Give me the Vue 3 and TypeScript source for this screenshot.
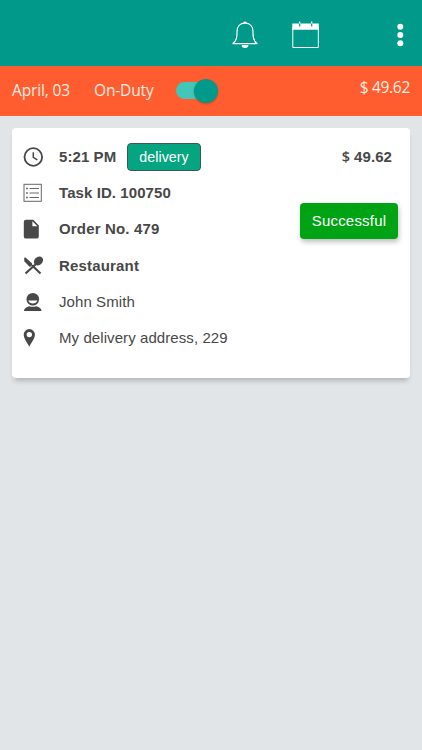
<script setup lang="ts">
type IconName = 'clock' | 'list' | 'file' | 'cutlery' | 'person' | 'pin'

interface DetailRow {
  icon: IconName
  text: string
  strong: boolean
}

const amount = '49.62'

const rows: DetailRow[] = [
  { icon: 'clock', text: '5:21 PM', strong: true },
  { icon: 'list', text: 'Task ID. 100750', strong: true },
  { icon: 'file', text: 'Order No. 479', strong: true },
  { icon: 'cutlery', text: 'Restaurant', strong: true },
  { icon: 'person', text: 'John Smith', strong: false },
  { icon: 'pin', text: 'My delivery address, 229', strong: false },
]
</script>

<template>
  <div class="screen">
    <header class="topbar">
      <svg class="bell" viewBox="0 0 26 28" width="26" height="28">
        <path d="M.9 22.600C4 20.300 5 18 5 13V10.500C5 5.500 8.200 2.200 13 2.200S21 5.500 21 10.500V13C21 18 22 20.300 25.100 22.600Z" fill="none" stroke="#fff" stroke-width="1.200" stroke-linejoin="round" />
        <path d="M11.200 2.100a1.800 1.700 0 0 1 3.600 0Z M9.600 24h6.800a3.400 3 0 0 1-6.800 0Z" fill="#fff" />
      </svg>
      <svg class="calendar" viewBox="0 0 28 28" width="28" height="28">
        <path d="M.8 6V26.500H26.300V6" fill="none" stroke="#fff" stroke-width="1" />
        <path d="M.3 2.500h26.500v6.300H.3Z M7.100.4h1.200v3H7.100Z M19.100.4h1.200v3h-1.200Z" fill="#fff" />
        <path d="M7.700 2.500v3M19.700 2.500v3" stroke="#00998a" stroke-width="1.200" />
      </svg>
      <svg class="more" viewBox="0 0 8 24" width="8" height="24">
        <circle cx="4.300" cy="3.700" r="3" fill="#fff" />
        <circle cx="4.300" cy="12" r="3" fill="#fff" />
        <circle cx="4.300" cy="20.300" r="3" fill="#fff" />
      </svg>
    </header>

    <section class="status">
      <span class="date">April, 03</span>
      <span class="duty">On-Duty</span>
      <span class="switch"><span class="knob"></span></span>
      <span class="total">$ {{ amount }}</span>
    </section>

    <main class="card">
      <ul class="details">
        <li v-for="row in rows" :key="row.icon" class="row">
          <span class="icon">
            <svg viewBox="0 0 20 20" width="20" height="20">
              <template v-if="row.icon === 'clock'">
                <circle cx="10.300" cy="10" r="8.800" fill="none" stroke="#484848" stroke-width="1.800" />
                <path d="M10.300 5.300V10.300L14.300 12.800" fill="none" stroke="#484848" stroke-width="1.500" />
              </template>
              <template v-else-if="row.icon === 'list'">
                <rect x="1" y="1.300" width="17.300" height="17" fill="none" stroke="#666" stroke-width="1" />
                <path d="M6.500 5.500h9.500M6.500 10h9.500M6.500 14.500h9.500" stroke="#666" stroke-width="1" />
                <path d="M3.200 4.800h1.500v1.500H3.200ZM3.200 9.300h1.500v1.500H3.200ZM3.200 13.800h1.500v1.500H3.200Z" fill="#484848" />
              </template>
              <path v-else-if="row.icon === 'file'" fill-rule="evenodd" fill="#484848" d="M3 .8h7.300L15.800 6.400V17.400a2.200 2.200 0 0 1-2.200 2.200H3A2.200 2.200 0 0 1 .8 17.400V3A2.200 2.200 0 0 1 3 .8ZM9.400 2.200v5h5Z" />
              <template v-else-if="row.icon === 'cutlery'">
                <path d="M1.900 .9L8.900 7.200 9.100 9.200 6.800 11 1.500 5.600Q.2 3.300 1.900 .9Z" fill="#484848" />
                <path d="M2.500 17.600L13 8M9 9.300L17.500 17.600" stroke="#484848" stroke-width="2.100" />
                <ellipse cx="15.500" cy="5" rx="5" ry="4" transform="rotate(-42 15.500 5)" fill="#484848" />
              </template>
              <template v-else-if="row.icon === 'person'">
                <circle cx="9.800" cy="7.300" r="6.300" fill="#484848" />
                <path d="M5.300 8.600H14.300C13.500 12.600 6.100 12.600 5.300 8.600Z" fill="#fff" />
                <path d="M.9 18.900C1.200 16.400 3.200 14.900 6.200 14.200Q9.800 15.400 13.400 14.200C16.400 14.900 18.300 16.400 18.600 18.900Z" fill="#484848" />
              </template>
              <path v-else fill-rule="evenodd" fill="#484848" d="M6.300 1a5.600 5.600 0 0 1 5.600 5.600C11.900 10.500 8.500 14.500 6.300 18.700 4.100 14.500.7 10.500.7 6.600A5.600 5.600 0 0 1 6.300 1ZM6.300 3.900a2.700 2.700 0 1 0 0 5.400 2.700 2.700 0 0 0 0-5.400Z" />
            </svg>
          </span>
          <span class="text" :class="[row.icon, { strong: row.strong }]">{{ row.text }}</span>
          <template v-if="row.icon === 'clock'">
            <span class="tag">delivery</span>
            <span class="price"><span class="currency">$</span>{{ amount }}</span>
          </template>
        </li>
      </ul>
      <div class="result">Successful</div>
    </main>
  </div>
</template>

<style>
body {
  margin: 0;
  background: #e1e5e8;
}
</style>

<style scoped>
.screen {
  min-height: 750px;
  background: #e1e5e8;
  color: #484848;
  font-family: 'Liberation Sans', Arial, sans-serif;
}

.topbar {
  box-sizing: border-box;
  display: flex;
  align-items: center;
  justify-content: flex-end;
  height: 66px;
  padding: 4px 18px 0 0;
  background: #00998a;
}

.calendar {
  margin-left: 34px;
}

.more {
  margin-left: 76px;
}

.status {
  box-sizing: border-box;
  display: flex;
  align-items: center;
  height: 50px;
  padding: 0 12px 1px;
  background: #ff5d2f;
  color: #ffeee5;
  font: 15.5px/20px 'Open Sans', 'Noto Sans', sans-serif;
  letter-spacing: -0.15px;
  white-space: nowrap;
}

.date {
  width: 82px;
  padding-bottom: 2px;
}

.duty {
  width: 82px;
  padding-bottom: 2px;
}

.switch {
  display: flex;
  align-items: center;
  justify-content: flex-end;
  width: 42px;
  height: 17px;
  border-radius: 9px;
  background: #43c6ba;
}

.knob {
  flex: none;
  width: 24px;
  height: 24px;
  border-radius: 50%;
  background: #00998a;
  box-shadow: 0 1px 2px rgba(80, 50, 30, 0.4);
}

.total {
  margin-left: auto;
  padding-bottom: 7px;
  letter-spacing: -0.3px;
}

.card {
  position: relative;
  box-sizing: border-box;
  height: 250px;
  margin: 12px 12px 0;
  padding: 11px 18px 0 11px;
  border-radius: 4px;
  background: #fff;
  box-shadow: 0 5px 5px -2px rgba(0, 0, 0, 0.2);
}

.details {
  margin: 0;
  padding: 0;
  list-style: none;
}

.row {
  display: flex;
  align-items: center;
  height: 36.2px;
  font-size: 15px;
  line-height: 20px;
  letter-spacing: 0.08px;
  white-space: nowrap;
}

.icon {
  display: flex;
  width: 36px;
}

.strong {
  font-weight: bold;
}

.text.clock {
  width: 68px;
}

.text.file,
.text.cutlery {
  letter-spacing: 0.17px;
}

.tag {
  box-sizing: border-box;
  width: 74px;
  height: 28px;
  border: 1px solid #3b5951;
  border-radius: 4px;
  background: #06a581;
  color: #fff;
  font-size: 14.2px;
  line-height: 26px;
  text-align: center;
}

.price {
  display: flex;
  align-items: baseline;
  margin-left: auto;
  padding-bottom: 1px;
  font-weight: bold;
}

.currency {
  margin-right: 4px;
  font-family: 'Open Sans', sans-serif;
  font-size: 14.5px;
  font-weight: 600;
}

.result {
  position: absolute;
  top: 75px;
  right: 12px;
  width: 98px;
  height: 36px;
  border-radius: 4px;
  background: #00a313;
  box-shadow: 1px 3px 5px rgba(0, 0, 0, 0.25);
  color: #fff;
  font-size: 15px;
  line-height: 36px;
  letter-spacing: 0.2px;
  text-align: center;
}
</style>
